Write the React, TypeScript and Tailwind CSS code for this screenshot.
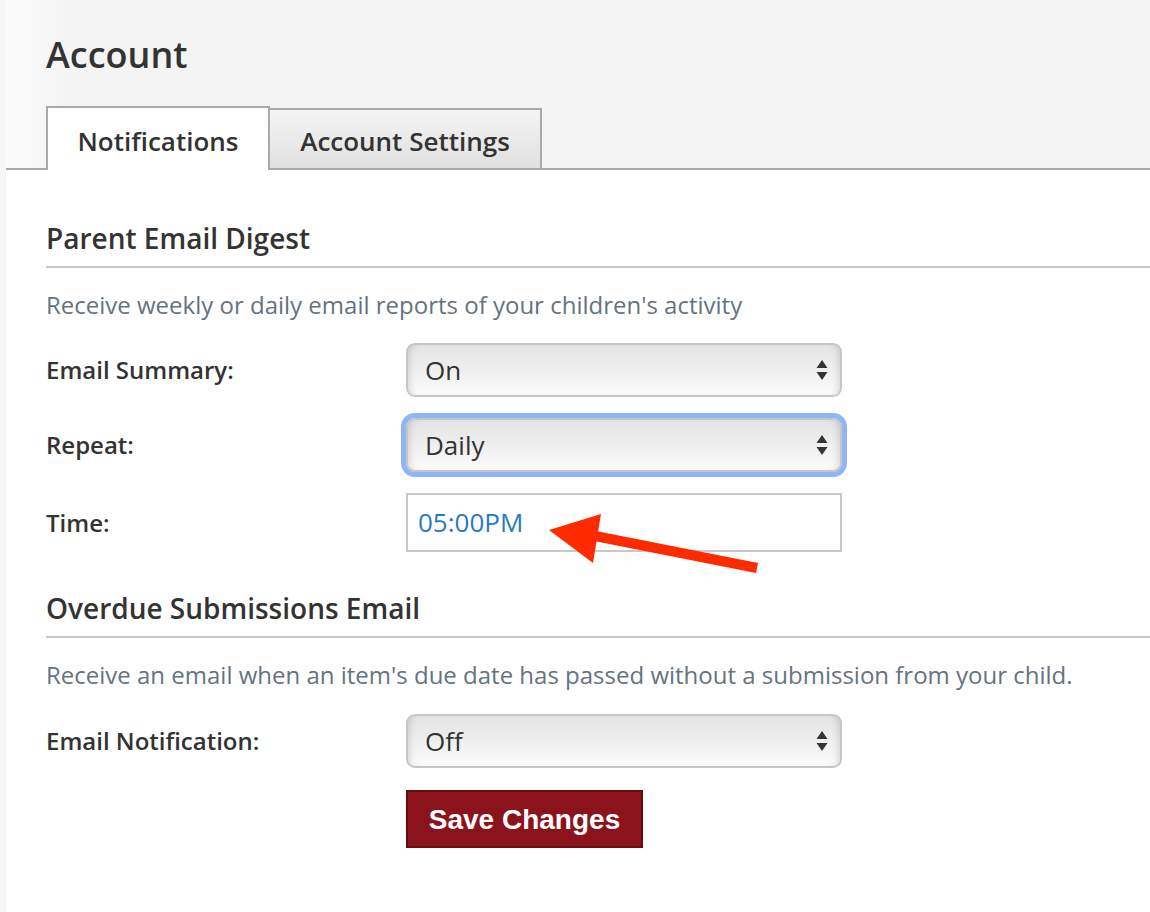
import React from "react";

function SelectArrows() {
  return (
    <svg width="12" height="22" viewBox="0 0 12 22" className="shrink-0">
      <path d="M6 1 L11.5 9 L0.5 9 Z" fill="#333" />
      <path d="M6 21 L11.5 13 L0.5 13 Z" fill="#333" />
    </svg>
  );
}

function FakeSelect({ value, focused }: { value: string; focused?: boolean }) {
  return (
    <div
      className={
        "flex h-[54px] w-[436px] items-center justify-between rounded-[9px] border-2 border-[#c6c6c6] bg-[linear-gradient(#e4e4e4,#f0f0f0_55%,#fbfbfb)] pl-[17px] pr-[12px] text-[26px] text-[#333] shadow-[inset_6px_0_6px_-4px_rgba(0,0,0,0.12),inset_-6px_0_6px_-4px_rgba(0,0,0,0.12)] " +
        (focused ? "outline-[5px] outline-solid outline-[#8db5f7] outline-offset-0" : "")
      }
    >
      <span>{value}</span>
      <SelectArrows />
    </div>
  );
}

function Row({ label, children }: { label: string; children: React.ReactNode }) {
  return (
    <div className="flex items-center">
      <div className="w-[360px] text-[24px] font-semibold text-[#333]">{label}</div>
      {children}
    </div>
  );
}

function SectionHeading({ title, desc }: { title: string; desc: string }) {
  return (
    <div>
      <h2 className="border-b-2 border-[#c8c8c8] pb-[12px] text-[28px] font-semibold leading-[32px] text-[#333]">
        {title}
      </h2>
      <p className="mt-[23px] text-[24px] leading-[28px] text-[#66737f]">{desc}</p>
    </div>
  );
}

export default function App() {
  return (
    <div className="relative flex min-h-[912px] w-full font-['Open_Sans',sans-serif]">
      <div className="w-[6px] shrink-0 bg-[#f7f6f4]" />
      <div className="flex flex-1 flex-col bg-white">
        <div className="border-b-2 border-[#aaaaaa] bg-[linear-gradient(to_right,#fbfbfb,#f4f4f4_60px)] pl-[40px]">
          <h1 className="pt-[35px] text-[36px] font-semibold leading-[40px] text-[#333]">Account</h1>
          <div className="-mb-[2px] mt-[31px] flex items-end">
            <div className="flex h-[64px] w-[224px] items-center justify-center border-x-2 border-t-2 border-[#aaaaaa] bg-white pt-[4px] text-[26px] font-semibold text-[#333]">
              Notifications
            </div>
            <div className="-ml-[2px] flex h-[62px] w-[274px] items-center justify-center border-2 border-[#aaaaaa] bg-[linear-gradient(#f5f5f5,#e0e0e0)] pt-[4px] text-[26px] font-semibold text-[#333]">
              Account Settings
            </div>
          </div>
        </div>

        <div className="flex flex-col pl-[40px] pt-[52px]">
          <SectionHeading
            title="Parent Email Digest"
            desc="Receive weekly or daily email reports of your children's activity"
          />
          <div className="mt-[24px] flex flex-col gap-[21px]">
            <Row label="Email Summary:">
              <FakeSelect value="On" />
            </Row>
            <Row label="Repeat:">
              <FakeSelect value="Daily" focused />
            </Row>
            <Row label="Time:">
              <div className="flex h-[59px] w-[436px] items-center border-2 border-[#c8c8c8] bg-white pl-[10px] text-[26px] text-[#2a7abf]">
                05:00PM
              </div>
            </Row>
          </div>

          <div className="mt-[40px]">
            <SectionHeading
              title="Overdue Submissions Email"
              desc="Receive an email when an item's due date has passed without a submission from your child."
            />
          </div>
          <div className="mt-[25px] flex flex-col gap-[22px]">
            <Row label="Email Notification:">
              <FakeSelect value="Off" />
            </Row>
            <div className="pl-[360px]">
              <button className="h-[58px] w-[237px] border-2 border-[#6a0a0f] bg-[#8b141c] pt-[2px] font-['Liberation_Sans',Arial,sans-serif] text-[28px] font-bold text-white">
                Save Changes
              </button>
            </div>
          </div>
        </div>
      </div>

      <svg
        className="pointer-events-none absolute left-[540px] top-[505px]"
        width="225"
        height="70"
        viewBox="0 0 225 70"
      >
        <path d="M9 25 L61 9 L53 58 Z" fill="#ff2a00" />
        <path d="M50 30 L217 63" stroke="#ff2a00" strokeWidth="10" />
      </svg>
    </div>
  );
}
